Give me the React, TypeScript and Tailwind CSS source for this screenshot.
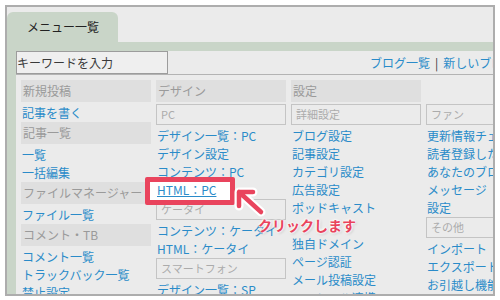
const LINK = 'h-[18px] leading-[18px] text-[12px] text-[#2a8bc9] pl-[1px] whitespace-nowrap';

type Item = { kind: 'head' | 'sub' | 'link' | 'blank'; text?: string };

const Head = ({ text }: { text?: string }) => (
  <div
    className={`h-[22px] leading-[22px] mb-[2px] pl-[2px] text-[12px] text-[#9a9a9a] whitespace-nowrap ${
      text ? 'bg-[#dfdfdf]' : ''
    }`}
  >
    {text}
  </div>
);

const Sub = ({ text }: { text?: string }) => (
  <div className="h-[21px] mb-[2px] border border-[#c4c4c4] pl-[4px] text-[11px] leading-[19px] text-[#ababab] whitespace-nowrap">
    {text}
  </div>
);

const Column = ({ items }: { items: Item[] }) => (
  <div className="w-[130px] shrink-0">
    {items.map((it, i) => {
      if (it.kind === 'head') return <Head key={i} text={it.text} />;
      if (it.kind === 'sub') return <Sub key={i} text={it.text} />;
      if (it.kind === 'blank') return <div key={i} className="h-[18px]" />;
      if (it.text === 'HTML：PC') {
        // highlighted item
        return (
          <div key={i} className={`relative ${LINK}`}>
            <span className="absolute left-[-11px] top-[-4px] w-[90px] h-[28px] border-[5px] border-[#e9445d] bg-white rounded-[2px]" />
            <span className="relative underline">{it.text}</span>
          </div>
        );
      }
      return (
        <div key={i} className={LINK}>
          {it.text}
        </div>
      );
    })}
  </div>
);

const h = (text?: string): Item => ({ kind: 'head', text });
const s = (text: string): Item => ({ kind: 'sub', text });
const l = (text: string): Item => ({ kind: 'link', text });

const columns: Item[][] = [
  [
    h('新規投稿'),
    l('記事を書く'),
    h('記事一覧'),
    l('一覧'),
    l('一括編集'),
    h('ファイルマネージャー'),
    l('ファイル一覧'),
    h('コメント・TB'),
    l('コメント一覧'),
    l('トラックバック一覧'),
    l('禁止設定'),
  ],
  [
    h('デザイン'),
    s('PC'),
    l('デザイン一覧：PC'),
    l('デザイン設定'),
    l('コンテンツ：PC'),
    l('HTML：PC'),
    s('ケータイ'),
    l('コンテンツ：ケータイ'),
    l('HTML：ケータイ'),
    s('スマートフォン'),
    l('デザイン一覧：SP'),
  ],
  [
    h('設定'),
    s('詳細設定'),
    l('ブログ設定'),
    l('記事設定'),
    l('カテゴリ設定'),
    l('広告設定'),
    l('ポッドキャスト'),
    { kind: 'blank' },
    l('独自ドメイン'),
    l('ページ認証'),
    l('メール投稿設定'),
    l('ソーシャル連携'),
  ],
  [
    h(),
    s('ファン'),
    l('更新情報チェック'),
    l('読者登録したブログ'),
    l('あなたのブログの読者'),
    l('メッセージ'),
    l('設定'),
    s('その他'),
    l('インポート'),
    l('エクスポート'),
    l('お引越し機能'),
  ],
];

export default function App() {
  return (
    <div className="relative w-[500px] h-[300px] bg-white pt-[5px] px-[5px] pb-[4px] font-['Noto_Sans_CJK_JP',sans-serif]">
      <div className="h-full border-2 border-[#adadad] bg-[#ebebeb] flex flex-col overflow-hidden">
        {/* tab */}
        <div className="pt-[5px] shrink-0">
          <div className="w-[111px] h-[30px] rounded-t-[6px] bg-[#c9d5c8] pl-[20px] text-[12px] leading-[30px] text-[#222]">
            メニュー一覧
          </div>
        </div>
        <div className="flex-1 min-h-0 flex bg-[#c9d5c8] pt-[9px] pl-[9px]">
          <div className="flex-1 min-w-0 bg-[#ebebeb] overflow-hidden">
            {/* search row */}
            <div className="h-[24px] flex items-start border-b border-[#b3b3b3]">
              <div className="w-[152px] h-[23px] shrink-0 border border-[#9c9c9c] bg-[#efefef] text-[12px] leading-[21px] text-[#3a3a3a] whitespace-nowrap">
                キーワードを入力
              </div>
              <div className="ml-[202px] h-[23px] flex items-center gap-[5px] text-[12px] whitespace-nowrap">
                <span className="text-[#2a8bc9]">ブログ一覧</span>
                <span className="text-[#333]">|</span>
                <span className="text-[#2a8bc9]">新しいブログを作成</span>
              </div>
            </div>
            {/* menu columns */}
            <div className="flex gap-[5px] pl-[5px] pt-[5px]">
              {columns.map((c, i) => (
                <Column key={i} items={c} />
              ))}
            </div>
          </div>
        </div>
      </div>

      {/* callout arrow */}
      <svg className="absolute left-[232px] top-[185px]" width="36" height="34" viewBox="0 0 36 34">
        <g fill="none" strokeLinecap="round" strokeLinejoin="round">
          <path d="M29 27 L7 7 M7 21 L7 7 L21 7" stroke="#ffffff" strokeWidth="9" />
          <path d="M29 27 L7 7 M7 21 L7 7 L21 7" stroke="#e9445d" strokeWidth="4.5" />
        </g>
      </svg>
      <div className="absolute left-[258px] top-[215px] text-[14px] leading-[20px] font-bold text-[#e9445d] whitespace-nowrap [text-shadow:0_0_2px_#fff,0_0_2px_#fff,0_0_3px_#fff,0_0_3px_#fff,1px_1px_3px_rgba(0,0,0,0.25)]">
        クリックします
      </div>
    </div>
  );
}
